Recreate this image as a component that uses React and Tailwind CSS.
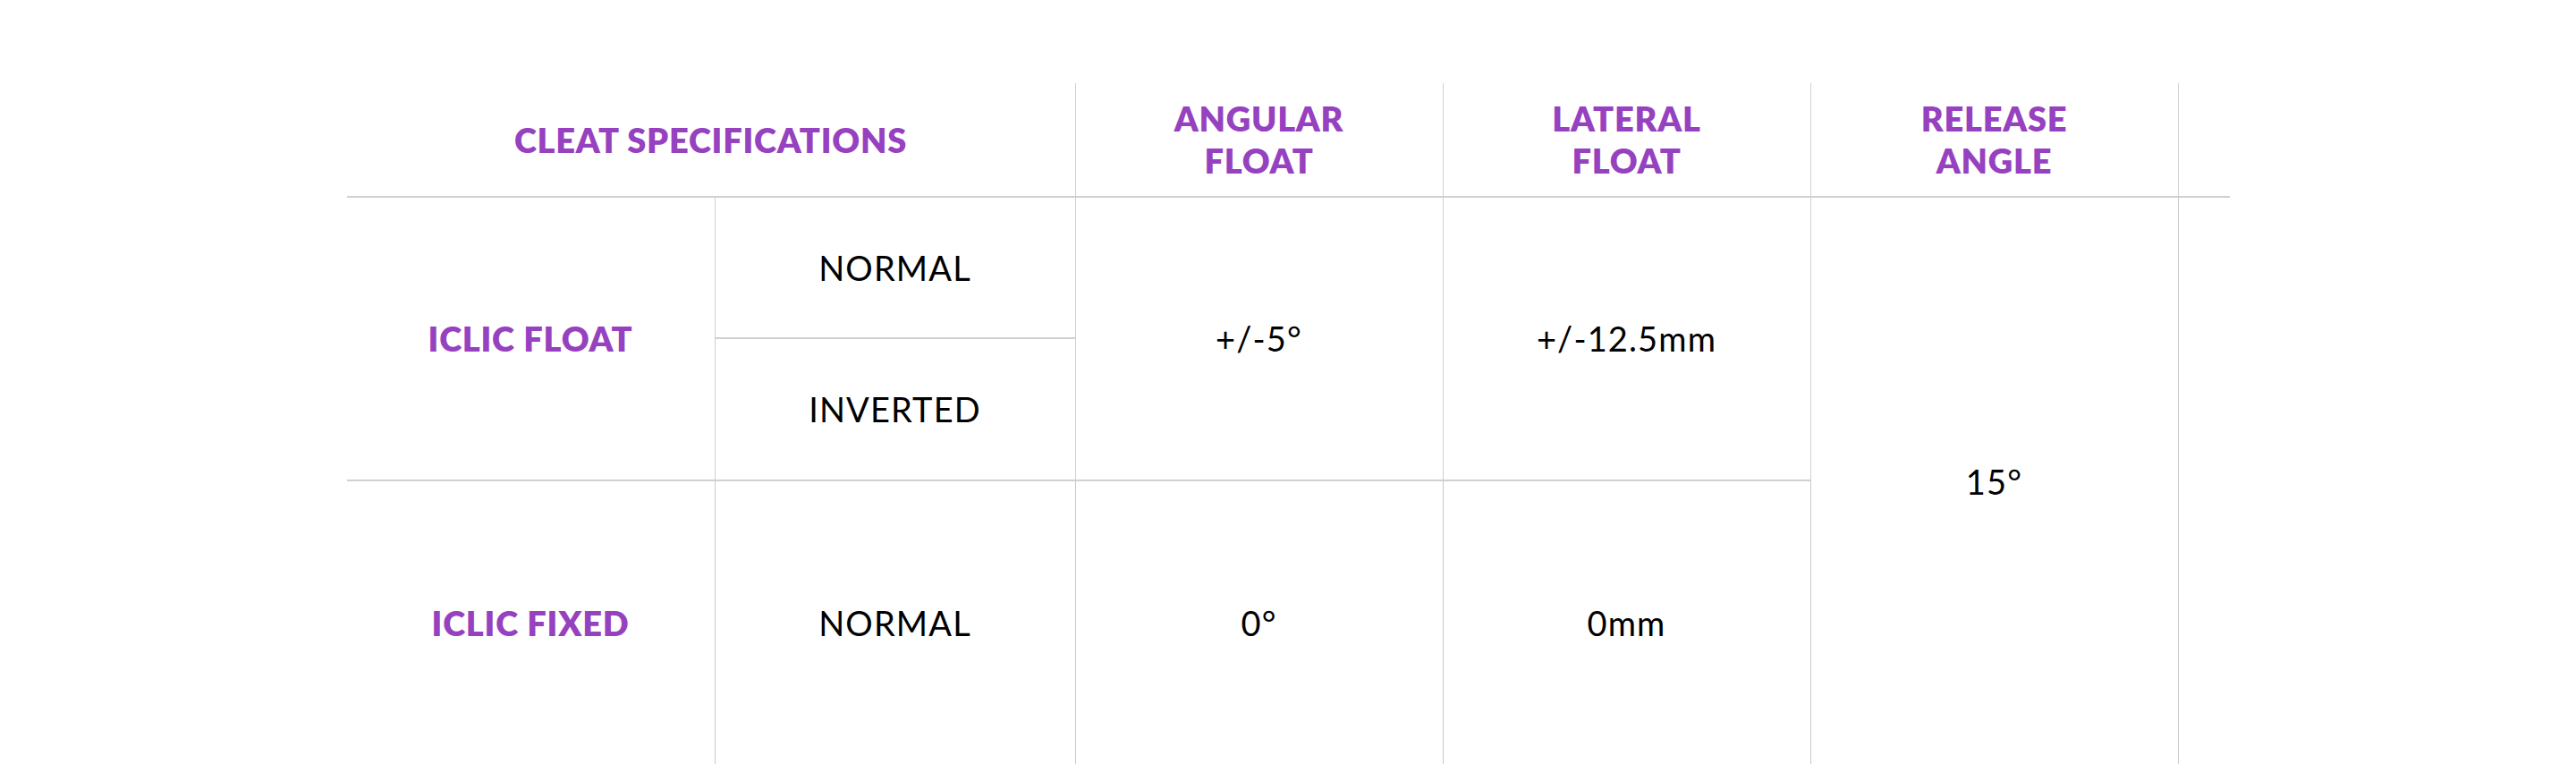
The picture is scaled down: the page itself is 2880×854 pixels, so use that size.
const head = "font-['Lato',_'Open_Sans',_sans-serif] font-extrabold text-[38px] leading-[47px] tracking-[0.02em] text-[#9641bf] text-center uppercase";
const body = "font-['Lato',_'Open_Sans',_sans-serif] font-normal text-[38px] leading-[47px] tracking-[0.03em] text-black text-center";
const cell = "flex items-center justify-center";
const vr = "border-r border-[#c9c9c9]";
const hb = "border-b-2 border-[#d0d0d0]";

export default function App() {
  return (
    <div className="w-full min-h-[854px] bg-white pt-[93px]">
      <div className="mx-auto w-[2105px] grid grid-cols-[412px_403px_411px_411px_411px_57px] grid-rows-[128px_158px_159px_317px]">
        {/* header */}
        <div className={`${cell} col-span-2 ${vr} ${hb}`}>
          <span className={head}>Cleat Specifications</span>
        </div>
        <div className={`${cell} ${vr} ${hb}`}>
          <span className={head}>Angular<br />Float</span>
        </div>
        <div className={`${cell} ${vr} ${hb}`}>
          <span className={head}>Lateral<br />Float</span>
        </div>
        <div className={`${cell} ${vr} ${hb}`}>
          <span className={head}>Release<br />Angle</span>
        </div>
        <div className={hb}></div>

        {/* iclic float */}
        <div className={`${cell} row-span-2 ${vr} ${hb}`}>
          <span className={head}>iClic Float</span>
        </div>
        <div className={`${cell} ${vr} ${hb}`}>
          <span className={body}>NORMAL</span>
        </div>
        <div className={`${cell} row-span-2 ${vr} ${hb}`}>
          <span className={body}>+/-5°</span>
        </div>
        <div className={`${cell} row-span-2 ${vr} ${hb}`}>
          <span className={body}>+/-12.5mm</span>
        </div>
        <div className={`${cell} row-span-3 ${vr}`}>
          <span className={body}>15°</span>
        </div>
        <div className="row-span-3"></div>
        <div className={`${cell} ${vr} ${hb}`}>
          <span className={body}>INVERTED</span>
        </div>

        {/* iclic fixed */}
        <div className={`${cell} ${vr}`}>
          <span className={head}>iClic Fixed</span>
        </div>
        <div className={`${cell} ${vr}`}>
          <span className={body}>NORMAL</span>
        </div>
        <div className={`${cell} ${vr}`}>
          <span className={body}>0°</span>
        </div>
        <div className={`${cell} ${vr}`}>
          <span className={body}>0mm</span>
        </div>
      </div>
    </div>
  );
}
